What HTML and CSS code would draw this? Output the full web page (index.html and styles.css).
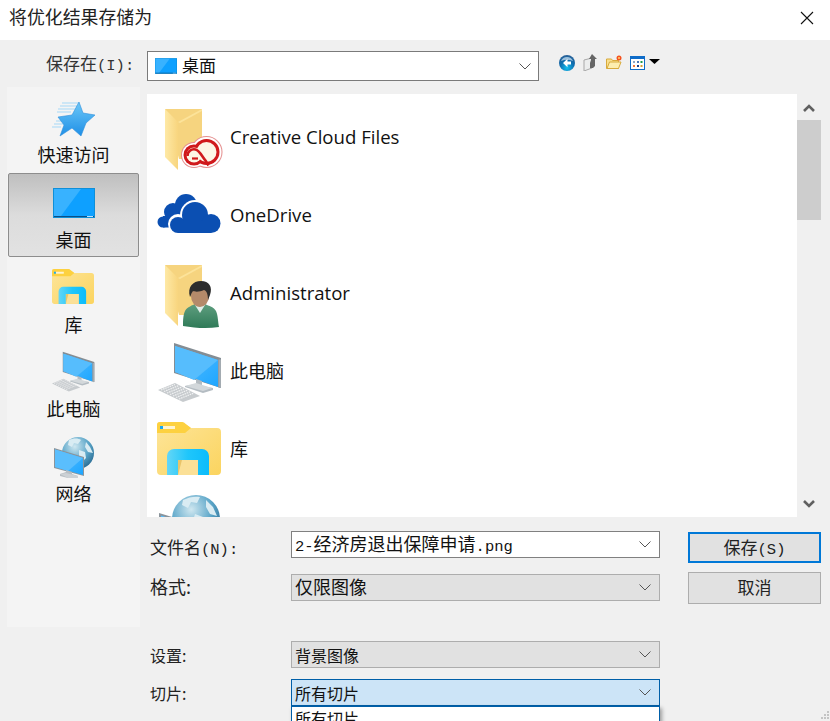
FILE: index.html
```html
<!DOCTYPE html>
<html lang="zh-CN">
<head>
<meta charset="utf-8">
<title>将优化结果存储为</title>
<link rel="stylesheet" href="styles.css">
</head>
<body>
<svg class="defs" width="0" height="0" aria-hidden="true">
  <defs>
    <linearGradient id="gScreen" x1="0" y1="0" x2="1" y2="1"><stop offset="0" stop-color="#5cc0ff"/><stop offset="1" stop-color="#1ea6ff"/></linearGradient>
    <linearGradient id="gFolderA" x1="0" y1="0" x2="1" y2="0"><stop offset="0" stop-color="#fee9a6"/><stop offset="1" stop-color="#f8d57e"/></linearGradient>
    <linearGradient id="gFolderB" x1="0" y1="0" x2="1" y2="1"><stop offset="0" stop-color="#fde59a"/><stop offset="1" stop-color="#fbd45f"/></linearGradient>
    <linearGradient id="gArch" x1="0" y1="0" x2="1" y2="0"><stop offset="0" stop-color="#63d6f6"/><stop offset="0.5" stop-color="#1fc6fb"/><stop offset="1" stop-color="#0cbcfb"/></linearGradient>
    <linearGradient id="gStar" x1="0" y1="0" x2="0" y2="1"><stop offset="0" stop-color="#6cc8f8"/><stop offset="1" stop-color="#1f8fe6"/></linearGradient>
    <radialGradient id="gGlobe" cx="0.4" cy="0.3" r="0.8"><stop offset="0" stop-color="#cfe7f0"/><stop offset="0.55" stop-color="#5aa5c8"/><stop offset="1" stop-color="#1f5f88"/></radialGradient>
    <radialGradient id="gBack" cx="0.5" cy="0.8" r="0.8"><stop offset="0" stop-color="#12c0f0"/><stop offset="0.55" stop-color="#0f6fb0"/><stop offset="1" stop-color="#2a5f95"/></radialGradient>
    <linearGradient id="gCoat" x1="0" y1="0" x2="0" y2="1"><stop offset="0" stop-color="#5f9e7f"/><stop offset="1" stop-color="#2f7a58"/></linearGradient>
    <symbol id="desk" viewBox="0 0 42 30">
      <rect width="42" height="30" fill="#0f8fd8"/>
      <rect x="1" y="1" width="40" height="27" fill="#0ea0ff"/>
      <path d="M1 1h27L8 28H1z" fill="#38b2ff"/>
      <rect x="1" y="28" width="40" height="1" fill="#0b4f86"/>
      <rect x="34" y="28" width="6" height="1" fill="#bfe4ff"/>
    </symbol>
    <symbol id="lib" viewBox="0 0 64 53">
      <path d="M0 3a3 3 0 0 1 3-3h21c2 0 3 .5 4 1.500L34 6h26a4 4 0 0 1 4 4v39a4 4 0 0 1-4 4H4a4 4 0 0 1-4-4z" fill="url(#gFolderB)"/>
      <path d="M0 3a3 3 0 0 1 3-3h21c2 0 3 .5 4 1.500L34 6l-6 5H0z" fill="#fdd140"/>
      <rect x="3" y="4" width="3" height="3" fill="#19a8f0"/>
      <rect x="6" y="4" width="12" height="3" fill="#fff4cf"/>
      <path d="M21 38h21v15H21z" fill="#fbe097"/>
      <path d="M21 53l4-15h-4z" fill="#e8c46a"/>
      <path d="M10 53V34a7 7 0 0 1 7-7h28a7 7 0 0 1 7 7v19H41V38H21v15z" fill="url(#gArch)"/>
    </symbol>
    <symbol id="pc" viewBox="0 0 64 60">
      <path d="M16 0l47 15v30l-47-15z" fill="#848d94"/>
      <path d="M17 3l43 14v27L17 29z" fill="url(#gScreen)"/>
      <path d="M17 3l43 14-24 20-19-8z" fill="#56bdfd"/>
      <path d="M60.500 16.500h2.500v28.500h-2.500z" fill="#a3abb1"/>
      <path d="M38 36l6 2v5l11 2v2l-10 3-18-6v-1l11-2z" fill="#b4bcc2"/>
      <path d="M27 43l11-3 16 5-9 3z" fill="#d3d8db"/>
      <path d="M0 47l17-7 25 13-17 6z" fill="#c7cbce"/>
      <path d="M3 47l14-5.500M6 48.500l15-6M9 50l15-6M12 51.500l15-6M15 53l15-6M18 54.500l15-6M21 56l15-6" stroke="#f2f3f4" stroke-width="1.200" stroke-dasharray="1.500 .8"/>
    </symbol>
    <symbol id="net" viewBox="0 0 41 41">
      <circle cx="25" cy="16" r="16" fill="url(#gGlobe)"/>
      <path d="M16 3c5-2 9-2 12 0l-3 4-4-1-2 4-4-2zM33 5l4 5 3 6-5-1-3-5zM26 13l6 2 1 6-4 4-3-3z" fill="#d9ecf3"/>
      <path d="M1 11l30 9v19L1 31z" fill="#8b949b"/>
      <path d="M2 12.500l28 8.500v17L2 30z" fill="url(#gScreen)"/>
      <path d="M2 12.500l28 8.500-15 13-13-4z" fill="#5abefd"/>
      <path d="M13 33l6 2v2l6 2v2H15l-8-2v-2l6-2z" fill="#b7bec3"/>
      <path d="M7 37l6-1 12 3v2H15z" fill="#ccd1d5"/>
    </symbol>
    <symbol id="fold" viewBox="0 0 38 62">
      <path d="M0 0h37v50H14z" fill="#f6d47f"/>
      <path d="M0 0l13 13v48L0 48z" fill="url(#gFolderA)"/>
      <path d="M13 13l24-13v2L15 14z" fill="#fce39a"/>
    </symbol>
    <symbol id="chev" viewBox="0 0 12 7">
      <path d="M.5.500L6 6l5.500-5.500" fill="none" stroke="#555" stroke-width="1"/>
    </symbol>
  </defs>
</svg>

<div class="dialog">
  <header class="titlebar">
    <span class="title">将优化结果存储为</span>
    <svg class="close" width="14" height="14" viewBox="0 0 14 14"><path d="M1 1l12 12M13 1L1 13" stroke="#111" stroke-width="1.100"/></svg>
  </header>

  <div class="panel">
    <div class="toolbar">
      <span class="look-label">保存在<span class="mono">(I):</span></span>
      <div class="combo addr">
        <svg class="addr-icon" width="22" height="16"><use href="#desk"/></svg>
        <span class="addr-text">桌面</span>
        <svg class="chev" width="12" height="7"><use href="#chev"/></svg>
      </div>
      <div class="tools">
        <svg width="16" height="16" viewBox="0 0 16 16"><circle cx="8" cy="8" r="8" fill="url(#gBack)"/><path d="M2 6a6.500 6.500 0 0 1 12 0 10 6 0 0 0-12 0z" fill="#9cc0dc"/><path d="M8.500 3.800L4 8l4.500 4.200V9.600H12V6.400H8.500z" fill="#fff"/></svg>
        <svg width="15" height="17" viewBox="0 0 15 17"><path d="M1 6l8-2v10l-8 3z" fill="#eceded" stroke="#a8a8a8"/><path d="M9 0l5 5h-2v7l-2 2H7V9l1-3V5H6z" fill="#666"/></svg>
        <svg width="16" height="15" viewBox="0 0 16 15"><path d="M.5 4h5l1 1.500h6v8H.5z" fill="#f9e08e" stroke="#d8aa3c"/><path d="M1 13.500L3.500 7H15l-2.500 6.500z" fill="#fdeeb0" stroke="#d8aa3c"/><circle cx="13" cy="3" r="2.500" fill="#f4511e"/><circle cx="13" cy="3" r="1" fill="#ffd36b"/></svg>
        <svg class="viewbtn" width="15" height="14" viewBox="0 0 15 14"><rect x=".5" y=".5" width="14" height="13" fill="#fff" stroke="#0f6cc8"/><rect width="15" height="3" fill="#0f6cc8"/><rect x="3" y="5" width="2" height="2" fill="#8aa6c8"/><rect x="7" y="5" width="2" height="2" fill="#4a78b8"/><rect x="10.500" y="5" width="2" height="2" fill="#1f9a4a"/><rect x="3" y="9" width="2" height="2" fill="#f07838"/><rect x="7" y="9" width="2" height="2" fill="#1a3f8a"/><rect x="10.500" y="9" width="2" height="2" fill="#d8a030"/></svg>
        <svg class="caret" width="11" height="5" viewBox="0 0 11 5"><path d="M0 0h11L5.500 5z" fill="#000"/></svg>
      </div>
    </div>

    <div class="content">
      <nav class="places">
        <div class="place">
          <svg class="place-icon icon-star" width="44" height="37" viewBox="0 0 44 37">
            <g stroke="#a5d8f7" stroke-width="1"><path d="M10 2h17M8 5h17M6 8h17M5 11h14M4 20h10M2 23h9M0 26h9"/></g>
            <path d="M27 1l4 11 12 2-9 8-5 13-9-8-12 8 4-11-6-8 14-2z" fill="url(#gStar)" stroke="#2d8fdc" stroke-width=".6"/>
          </svg>
          <span>快速访问</span>
        </div>
        <div class="place selected">
          <svg class="place-icon icon-desk" width="42" height="30"><use href="#desk"/></svg>
          <span>桌面</span>
        </div>
        <div class="place">
          <svg class="place-icon icon-lib" width="42" height="35"><use href="#lib"/></svg>
          <span>库</span>
        </div>
        <div class="place place-low">
          <svg class="place-icon icon-pc" width="43" height="42"><use href="#pc"/></svg>
          <span>此电脑</span>
        </div>
        <div class="place place-low">
          <svg class="place-icon icon-net" width="41" height="41"><use href="#net"/></svg>
          <span>网络</span>
        </div>
      </nav>

      <div class="main">
        <div class="browser">
          <ul class="files">
            <li class="file">
              <span class="thumb">
                <svg class="fold" width="38" height="62"><use href="#fold"/></svg>
                <svg class="badge-cc" width="42" height="33" viewBox="0 0 42 33">
                  <g fill="#e58f8f"><circle cx="25.500" cy="16" r="16"/><circle cx="13" cy="19" r="13"/></g>
                  <g fill="#fff"><circle cx="25.500" cy="16" r="15"/><circle cx="13" cy="19" r="12"/></g>
                  <g fill="#d0191c"><circle cx="25.500" cy="16" r="13"/><circle cx="13" cy="19" r="10.500"/></g>
                  <g fill="#fdf6e6"><circle cx="25.500" cy="16" r="10"/><circle cx="13" cy="19" r="7.500"/></g>
                  <path d="M6.500 20a6.500 6.500 0 0 1 8-6.500c4 1 6 6 10 11l3 5" fill="none" stroke="#d0191c" stroke-width="2.600"/>
                  <path d="M11 22.500h6" fill="none" stroke="#d0191c" stroke-width="2.200"/>
                </svg>
              </span>
              <span class="name">Creative Cloud Files</span>
            </li>
            <li class="file">
              <span class="thumb">
                <svg class="cloud" width="64" height="39" viewBox="0 0 64 39">
                  <g fill="#0b4fb2">
                    <circle cx="6" cy="28" r="5.500"/><circle cx="16" cy="18" r="9"/><circle cx="29" cy="11" r="11"/><path d="M6 22h30v11.500H6z"/>
                  </g>
                  <g fill="#fff">
                    <circle cx="21" cy="30" r="10"/><circle cx="38" cy="21" r="15"/><circle cx="54" cy="29" r="11.500"/><path d="M21 26h33v13H21z"/>
                  </g>
                  <g fill="#0b4fb2">
                    <circle cx="21" cy="31" r="8"/><circle cx="38" cy="21" r="13"/><circle cx="54" cy="29.500" r="9.500"/><path d="M21 27h33v12H21z"/>
                  </g>
                </svg>
              </span>
              <span class="name">OneDrive</span>
            </li>
            <li class="file">
              <span class="thumb">
                <svg class="fold" width="38" height="62"><use href="#fold"/></svg>
                <svg class="badge-user" width="36" height="48" viewBox="0 0 36 48">
                  <path d="M0 45c0-4 0-11 2-15 2-4 8-6 10-7h10c4 2 9 3 11 7 2 4 2 11 3 16-12 2-24 1-36-1z" fill="url(#gCoat)"/>
                  <path d="M12 24l5 8 5-8z" fill="#dfeee8"/>
                  <ellipse cx="17" cy="15" rx="9" ry="11" fill="#b48a6a"/>
                  <path d="M7 16C4 6 10 0 18 0s12 6 9 14l-2 5c0-5-1-9-4-10-4 2-9 2-11 1-2 2-2 5-3 6z" fill="#2d2d2d"/>
                </svg>
              </span>
              <span class="name">Administrator</span>
            </li>
            <li class="file">
              <span class="thumb"><svg class="big-pc" width="64" height="60"><use href="#pc"/></svg></span>
              <span class="name cjk">此电脑</span>
            </li>
            <li class="file">
              <span class="thumb"><svg class="big-lib" width="64" height="53"><use href="#lib"/></svg></span>
              <span class="name cjk">库</span>
            </li>
            <li class="file">
              <span class="thumb">
                <svg class="big-net" width="64" height="29" viewBox="0 0 64 29">
                  <circle cx="37" cy="24" r="24" fill="url(#gGlobe)"/>
                  <path d="M24 5c6-3 12-4 17-3l-3 6-6-1-3 6-6-3zM47 5l7 7 4 9-7-2-4-7zM36 19l8 3 1 7H33z" fill="#d9ecf3"/>
                  <path d="M0 18l36 11H0z" fill="#8b949b"/>
                  <path d="M2 20.500l27 8.500H2z" fill="#56bdfd"/>
                </svg>
              </span>
            </li>
          </ul>
          <div class="scrollbar">
            <svg class="arrow" width="12" height="8" viewBox="0 0 12 8"><path d="M1 7l5-5 5 5" fill="none" stroke="#606060" stroke-width="2.600"/></svg>
            <div class="thumb-bar"></div>
            <svg class="arrow bottom" width="12" height="8" viewBox="0 0 12 8"><path d="M1 1l5 5 5-5" fill="none" stroke="#606060" stroke-width="2.600"/></svg>
          </div>
        </div>

        <div class="form">
          <div class="fields">
            <label class="lbl lbl-file">文件名<span class="mono">(N):</span></label>
            <div class="combo field file-field"><span class="val val-file"><span class="mono">2-</span>经济房退出保障申请<span class="mono">.png</span></span><svg class="chev" width="12" height="7"><use href="#chev"/></svg></div>
            <label class="lbl lbl-format">格式:</label>
            <div class="combo field gray"><span class="val val-format">仅限图像</span><svg class="chev" width="12" height="7"><use href="#chev"/></svg></div>
          </div>
          <div class="actions">
            <button class="btn primary">保存<span class="mono">(S)</span></button>
            <button class="btn">取消</button>
          </div>
          <div class="fields second">
            <label class="lbl small">设置:</label>
            <div class="combo field gray"><span class="val small">背景图像</span><svg class="chev" width="12" height="7"><use href="#chev"/></svg></div>
            <label class="lbl small">切片:</label>
            <div class="slice">
              <div class="combo field active"><span class="val small">所有切片</span><svg class="chev" width="12" height="7"><use href="#chev"/></svg></div>
              <div class="menu">所有切片</div>
            </div>
          </div>
        </div>
      </div>
    </div>
    <svg class="grip" width="10" height="11" viewBox="0 0 10 11"><path d="M7 1h2v2H7zM4 4h2v2H4zM7 4h2v2H7zM1 7h2v2H1zM4 7h2v2H4zM7 7h2v2H7z" fill="#c4c4c4"/></svg>
  </div>
</div>
</body>
</html>
```

FILE: styles.css
```css
* { box-sizing: border-box; }
html, body { margin: 0; padding: 0; }
body {
  width: 830px;
  height: 721px;
  overflow: hidden;
  font-family: "Noto Sans CJK SC", "Noto Sans", sans-serif;
  color: #111;
}
.defs { position: absolute; }
svg { display: block; flex: none; }
.mono { font-family: "Liberation Mono", monospace; font-size: 15.500px; }

.dialog { width: 830px; height: 721px; display: flex; flex-direction: column; overflow: hidden; background: #f0f0f0; }
.titlebar { height: 40px; flex: none; background: #fff; display: flex; align-items: center; justify-content: space-between; padding: 0 16px 0 9px; }
.title { font-size: 17.900px; line-height: 24px; color: #222; padding-bottom: 8px; }
.close { margin-bottom: 4px; }

.panel { flex: 1; position: relative; min-height: 0; }
.toolbar { height: 47px; display: flex; align-items: flex-start; padding-top: 11px; }
.look-label { width: 139px; padding-left: 46px; font-size: 17px; line-height: 24px; color: #333; white-space: nowrap; }

.combo { display: flex; align-items: center; background: #fff; border: 1px solid #7a7a7a; }
.addr { width: 392px; height: 30px; margin-left: 8px; border-width: 1.500px; padding: 0 7px; font-size: 17px; gap: 5px; }
.addr-text { padding-bottom: 3px; }
.addr .chev { margin-left: auto; }
.tools { display: flex; align-items: center; margin-left: 20px; margin-top: 3px; gap: 8px; height: 17px; }
.viewbtn { margin-right: -4px; }
.caret { margin-top: -3px; }

.content { display: flex; align-items: flex-start; }
.places { width: 133px; height: 540px; margin-left: 7px; background: #f4f4f4; display: flex; flex-direction: column; padding-top: 1px; }
.place { height: 85px; flex: none; display: flex; flex-direction: column; align-items: center; justify-content: flex-end; padding-bottom: 5px; font-size: 18px; line-height: 26px; border: 1px solid transparent; margin: 0 1px; }
.place.selected { height: 84px; padding-bottom: 4px; background: linear-gradient(#bfbfbf, #dcdcdc 50%, #e2e2e2); border: 1px solid #8d8d8d; border-radius: 2px; margin-bottom: 1px; }
.place-low { padding-bottom: 6px; }
.icon-star { margin-bottom: 3px; }
.icon-desk { margin-bottom: 8px; }
.icon-lib { margin-bottom: 7px; margin-right: 1px; }
.icon-pc { margin-bottom: 2px; }
.icon-net { margin-bottom: 2px; }

.main { width: 683px; margin-left: 7px; padding-top: 7px; display: flex; flex-direction: column; }
.browser { display: flex; height: 423px; width: 674px; }
.files { flex: 650px 0 0; list-style: none; margin: 0; padding: 4px 0 0; background: #fff; overflow: hidden; }
.file { height: 78px; display: flex; align-items: center; }
.thumb { width: 83px; height: 78px; position: relative; flex: none; display: block; }
.name { font-size: 18.600px; font-family: "Open Sans", "Noto Sans CJK SC", sans-serif; color: #111; white-space: nowrap; padding-bottom: 2px; }
.name.cjk { font-size: 18px; font-family: "Noto Sans CJK SC", sans-serif; padding-bottom: 2px; }
.fold { position: absolute; left: 18px; top: 11px; }
.badge-cc { position: absolute; left: 34px; top: 38px; }
.badge-user { position: absolute; left: 36px; top: 27px; }
.cloud { position: absolute; left: 10px; top: 18px; }
.big-pc { position: absolute; left: 11px; top: 11px; }
.big-lib { position: absolute; left: 10px; top: 12px; }
.big-net { position: absolute; left: 12px; top: 7px; }

.scrollbar { width: 24px; display: flex; flex-direction: column; align-items: center; background: #f0f0f0; padding-top: 10px; }
.arrow.bottom { margin-top: auto; margin-bottom: 9px; }
.thumb-bar { width: 24px; height: 100px; margin-top: 8px; background: #cdcdcd; }

.form { display: grid; grid-template-columns: 513px 133px; column-gap: 28px; margin-top: 14px; }
.fields { display: grid; grid-template-columns: 144px 369px; grid-auto-rows: 27px; row-gap: 16px; align-items: center; }
.fields.second { grid-column: 1; margin-top: 37px; row-gap: 11px; }
.lbl { font-size: 17px; line-height: 26px; padding-left: 3px; color: #222; white-space: nowrap; }
.lbl-file { padding-top: 8px; }
.lbl-format { font-size: 18px; padding-bottom: 4px; }
.lbl.small { font-size: 16px; }
.field { height: 27px; padding: 0 8px 0 3px; font-size: 17px; justify-content: space-between; border-color: #808080; }
.val { white-space: nowrap; }
.val-file { font-size: 18px; padding-bottom: 4px; }
.val-format { font-size: 18px; padding-bottom: 4px; }
.val.small { font-size: 16px; }
.gray { background: #e1e1e1; border-color: #adadad; }
.active { background: #cce4f7; border-color: #005fa8; }
.slice { position: relative; }
.menu { position: absolute; left: 0; top: 27px; width: 369px; height: 40px; background: #fff; border: 1px solid #005fa8; padding-left: 3px; font-size: 16px; line-height: 22px; box-shadow: 2px 2px 4px rgba(0,0,0,.35); }

.actions { display: flex; flex-direction: column; gap: 9px; padding-top: 1px; }
.btn { width: 133px; height: 32px; padding: 0 0 2px; font: inherit; font-size: 17px; color: #222; background: #e1e1e1; border: 1px solid #adadad; line-height: 26px; }
.btn.primary { height: 31px; border: 2px solid #0078d7; }
.grip { position: absolute; right: 0; bottom: 0; }
```
